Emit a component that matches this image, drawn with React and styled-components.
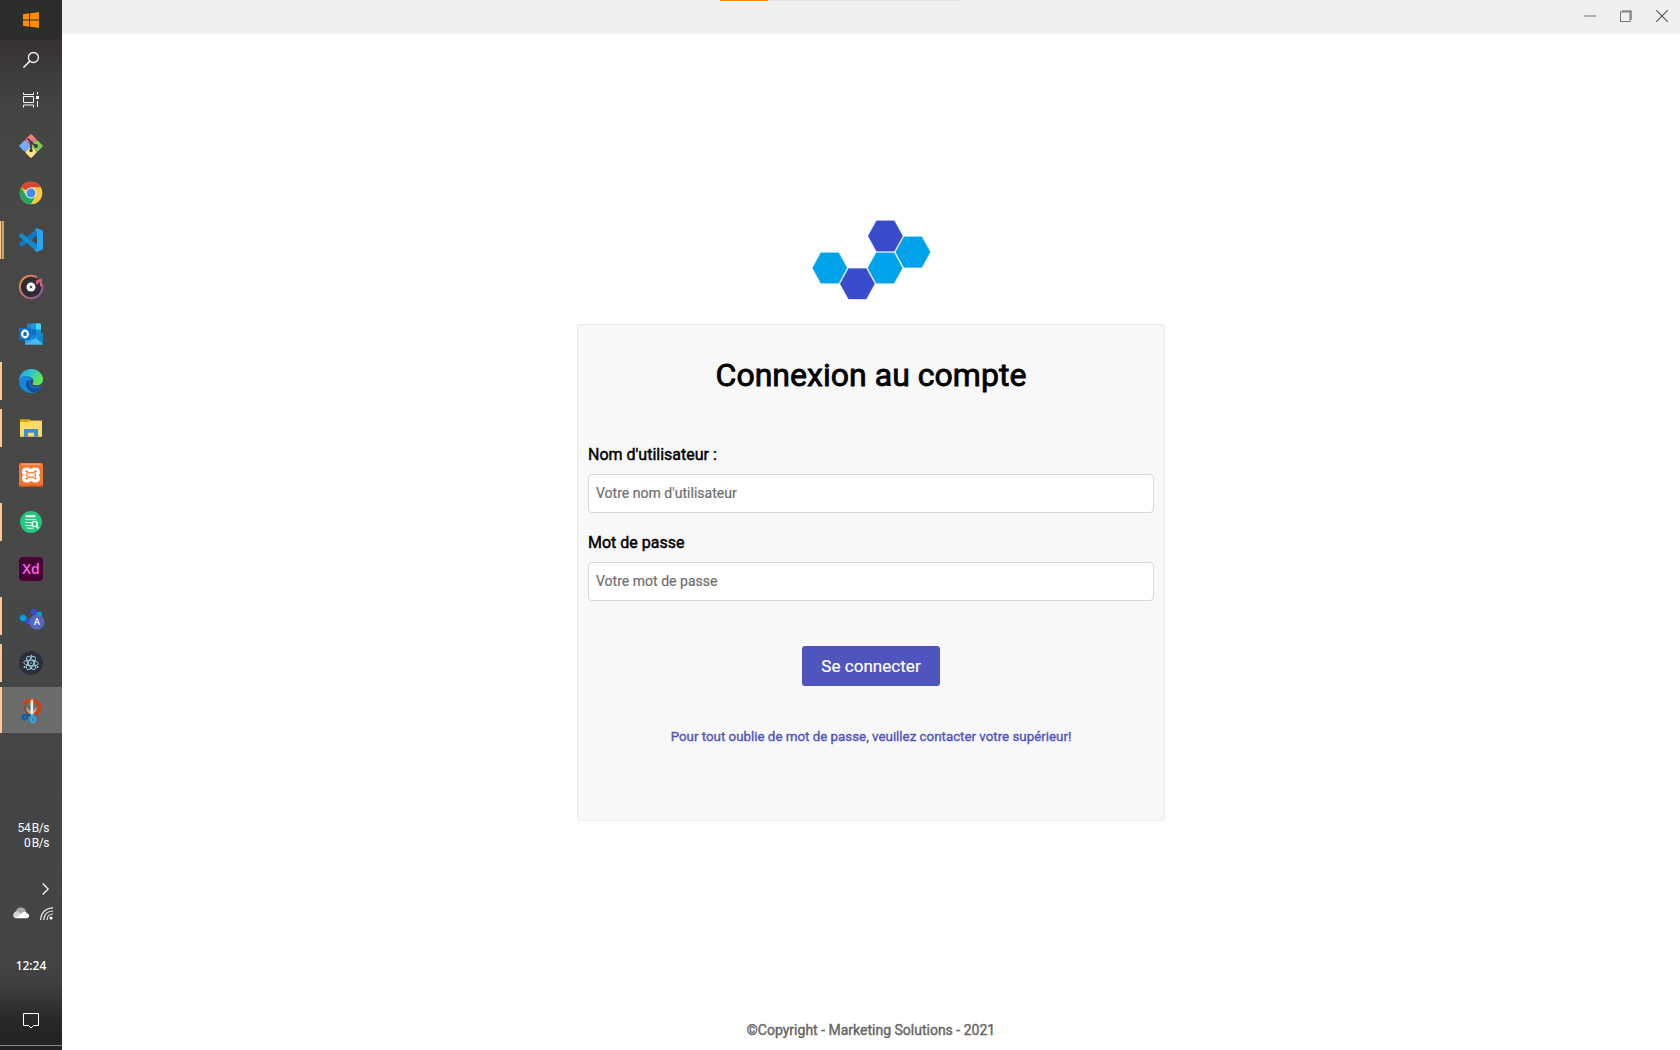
import React from "react";
import styled, { createGlobalStyle } from "styled-components";

const GlobalStyle = createGlobalStyle`
  * { box-sizing: border-box; }
  html, body { margin: 0; padding: 0; overflow: hidden; }
  body { font-family: Roboto, "Liberation Sans", sans-serif; background: #fff; }
`;

const Desktop = styled.div`
  display: flex;
  width: 1680px;
  height: 1050px;
  overflow: hidden;
`;

const Taskbar = styled.aside`
  display: flex;
  flex-direction: column;
  width: 62px;
  height: 1050px;
  flex: none;
  background: linear-gradient(180deg, #302e2d 0, #363332 40px, #444443 105px, #474846 200px, #474847 520px, #444546 760px, #434445 960px, #3d3e3e 985px, #262626 1025px, #222 1050px);
`;

const SystemCell = styled.div`
  display: flex;
  align-items: center;
  justify-content: center;
  height: 40px;
  flex: none;
  background: ${(p) => (p.$dark ? "#2c2c2b" : "transparent")};
`;

const AppList = styled.nav`
  display: flex;
  flex-direction: column;
  gap: 1px;
  padding-top: 3px;
`;

const indicators = {
  none: "transparent",
  open: "linear-gradient(90deg, #ffc884 2px, transparent 2px)",
  stacked: "linear-gradient(90deg, #ffc884 1px, #8d7454 1px, #8d7454 2px, #c69f6e 2px, #c69f6e 4px)",
  focused: "#ffc884",
};

const AppCell = styled.div`
  display: flex;
  align-items: center;
  height: 46px;
  background: ${(p) => (p.$state === "focused" ? "#6b6c6c" : "transparent")};
  &::before {
    content: "";
    width: ${(p) => (p.$state === "stacked" ? 4 : 2)}px;
    height: ${(p) => (p.$state === "focused" ? 46 : 38)}px;
    background: ${(p) => indicators[p.$state]};
  }
`;

const AppIcon = styled.svg`
  width: 26px;
  height: 28px;
  margin-left: ${(p) => (p.$state === "stacked" ? 14 : 16)}px;
  flex: none;
  overflow: visible;
`;

const Network = styled.div`
  display: flex;
  flex-direction: column;
  align-items: flex-end;
  margin-top: 88px;
  padding-right: 13px;
  color: #fff;
  font: 12px/15px Roboto, sans-serif;
  letter-spacing: -0.45px;
  word-spacing: -1px;
`;

const ShowHidden = styled.div`
  display: flex;
  justify-content: flex-end;
  margin-top: 32px;
  padding-right: 13px;
`;

const TrayRow = styled.div`
  display: flex;
  justify-content: space-between;
  margin-top: 11px;
  padding: 0 9px 0 12px;
`;

const Clock = styled.div`
  margin-top: 37px;
  text-align: center;
  color: #fff;
  font: 500 12px/18px "Noto Sans", sans-serif;
  letter-spacing: 0;
`;

const Notifications = styled.div`
  display: flex;
  justify-content: center;
  margin-top: 38px;
`;

const DesktopEdge = styled.div`
  height: 5px;
  margin-top: auto;
  border-top: 1px solid #868686;
`;

const AppWindow = styled.div`
  display: flex;
  flex-direction: column;
  flex: 1;
  background: #fff;
`;

const TitleBar = styled.header`
  display: grid;
  grid-template-columns: 658px 241px 1fr;
  height: 34px;
  flex: none;
  background: #f0f0f0;
`;

const LoadTrack = styled.div`
  grid-column: 2;
  height: 1px;
  background: linear-gradient(90deg, #ff8c00 48px, #e5e5e5 48px);
`;

const WindowControls = styled.div`
  display: flex;
  justify-content: flex-end;
  gap: 24px;
  padding: 10px 12px 0 0;
`;

const Glyph = styled.svg`
  display: block;
  width: ${(p) => p.$w}px;
  height: ${(p) => p.$h}px;
  flex: none;
`;

const Page = styled.main`
  display: flex;
  flex-direction: column;
  align-items: center;
  flex: 1;
  padding-top: 185px;
`;

const LogoMark = styled.svg`
  width: 120px;
  height: 82px;
  flex: none;
`;

const LoginCard = styled.form`
  display: flex;
  flex-direction: column;
  width: 588px;
  height: 497px;
  margin-top: 23px;
  padding: 0 10px;
  background: #f8f8f8;
  border: 1px solid #ebebeb;
  border-radius: 3px;
`;

const Title = styled.h1`
  margin: 31px 0 0;
  text-align: center;
  color: #000;
  font: 400 32px/38px Roboto, sans-serif;
  -webkit-text-stroke: 0.85px #000;
  letter-spacing: 0.03px;
`;

const Field = styled.div`
  display: flex;
  flex-direction: column;
  margin-top: ${(p) => p.$gap}px;
`;

const Label = styled.label`
  color: #000;
  font: 400 16px/20px Roboto, sans-serif;
  -webkit-text-stroke: 0.45px #000;
  margin-bottom: 9px;
`;

const TextInput = styled.input`
  width: 566px;
  height: 39px;
  padding: 0 7px 2px;
  border: 1px solid #d9d9d9;
  border-radius: 4px;
  background: #fff;
  outline: none;
  font: 400 14px Roboto, sans-serif;
  letter-spacing: 0.02px;
  &::placeholder {
    color: #6f6f6f;
    opacity: 1;
    -webkit-text-stroke: 0.2px #6f6f6f;
  }
`;

const SubmitButton = styled.button`
  align-self: center;
  width: 138px;
  height: 40px;
  margin-top: 45px;
  padding: 0;
  border: 0;
  border-radius: 3px;
  background: #5055be;
  color: #fff;
  font: 400 17px/40px Roboto, sans-serif;
  -webkit-text-stroke: 0.2px #fff;
  letter-spacing: 0.04px;
`;

const Help = styled.p`
  margin: 42px 0 0;
  text-align: center;
  color: #5055be;
  font: 400 13.333px/18px Roboto, sans-serif;
  -webkit-text-stroke: 0.35px #5055be;
`;

const Footer = styled.footer`
  margin-top: auto;
  padding-bottom: 10px;
  color: #666;
  font: 400 14px/20px Roboto, sans-serif;
  -webkit-text-stroke: 0.4px #666;
`;

const icons = {
  git: (
    <>
      <g transform="rotate(45 13 14)">
        <rect x="4.5" y="5.5" width="8.5" height="8.5" rx="1.2" fill="#f17c80" />
        <rect x="13" y="5.5" width="8.5" height="8.5" rx="1.2" fill="#80cf4a" />
        <rect x="13" y="14" width="8.5" height="8.5" rx="1.2" fill="#ffe28a" />
        <rect x="4.5" y="14" width="8.5" height="8.5" rx="1.2" fill="#75aaff" />
      </g>
      <g transform="translate(13 14) rotate(45)">
        <rect x="-8.5" y="-8.5" width="8" height="8" rx="1.2" fill="#f17c80" />
        <rect x=".5" y="-8.5" width="8" height="8" rx="1.2" fill="#80cf4a" />
        <rect x=".5" y=".5" width="8" height="8" rx="1.2" fill="#ffe28a" />
        <rect x="-8.5" y=".5" width="8" height="8" rx="1.2" fill="#75aaff" />
      </g>
      <path d="M9.5 6.5L13 10v9M13 10.500l5 3.500" fill="none" stroke="#3f4040" strokeWidth="1.8" />
      <circle cx="13" cy="10.5" r="1.8" fill="#3f4040" />
      <circle cx="18" cy="14" r="1.9" fill="#3f4040" />
      <circle cx="13" cy="18.5" r="1.8" fill="#3f4040" />
    </>
  ),
  chrome: (
    <>
      <circle cx="13" cy="14" r="11.2" fill="#fdc93c" />
      <path d="M13 14L3.3 8.4A11.2 11.2 0 0 1 22.7 8.4H13z" fill="#dc4437" />
      <path d="M3.3 8.4a11.2 11.2 0 0 0 9.7 16.8l4.9-8.4-9.8 0z" fill="#1fa363" />
      <path d="M13 8.4h9.7a11.2 11.2 0 0 1-9.7 16.8l4.9-8.4z" fill="#fdc93c" />
      <circle cx="13" cy="14" r="5.5" fill="#f3f3f3" />
      <circle cx="13" cy="14" r="4.5" fill="#4688f4" />
    </>
  ),
  vscode: (
    <>
      <path d="M19 2.2L1.2 17.3v2l2.3 1.7L19 9.5z" fill="#1179bd" />
      <path d="M19 25.8L1.2 10.7v-2L3.5 7 19 18.5z" fill="#1688d2" />
      <path d="M18.5 2l6.5 2.800v18.400L18.5 26c-.8-.4-1.3-.9-1.3-1.5L19 22V6l-1.800-2.500c0-.6.5-1.100 1.300-1.500z" fill="#27a4f3" />
    </>
  ),
  groove: (
    <>
      <defs>
        <linearGradient id="ring" x1="0" y1="0" x2="1" y2="1">
          <stop offset="0" stopColor="#ff9640" /><stop offset=".5" stopColor="#cf6b78" /><stop offset="1" stopColor="#8455b8" />
        </linearGradient>
      </defs>
      <circle cx="13" cy="14" r="10" fill="#302d30" />
      <path d="M19 4.3A11.3 11.3 0 1 0 24 11" fill="none" stroke="url(#ring)" strokeWidth="1.8" />
      <path d="M18 9l5-2.300v6.500M22.500 7l-4 4" fill="none" stroke="#c86675" strokeWidth="2" />
      <circle cx="13" cy="14" r="4.5" fill="#fff" />
      <circle cx="13" cy="14" r="1.3" fill="#555" />
    </>
  ),
  outlook: (
    <>
      <rect x="9" y="3.5" width="14" height="14" rx="1" fill="#1588d1" />
      <path d="M13.5 3.5H18v6.200h-4.500z" fill="#2094dd" />
      <path d="M18 3.5h4q1 0 1 1v5.200h-5z" fill="#50d5ff" />
      <path d="M13.5 9.7H18v5h-4.500z" fill="#0b6fbd" />
      <path d="M18 9.7h5v4h-5z" fill="#1490df" />
      <path d="M7 13l9 5 9-5v11.500H7z" fill="#28a8ea" />
      <path d="M7 15l18 9.500V13l-7.500 5z" fill="#1488cf" />
      <path d="M7 24.500L18 18l7 6.500z" fill="#45bdee" />
      <rect x="1" y="8" width="12" height="12" rx="1" fill="#0872c8" />
      <ellipse cx="7" cy="14" rx="2.9" ry="3.4" fill="none" stroke="#fff" strokeWidth="2.1" />
    </>
  ),
  edge: (
    <>
      <defs>
        <linearGradient id="wave" x1="0" y1="0" x2="1" y2=".5">
          <stop offset="0" stopColor="#219bdd" /><stop offset=".5" stopColor="#32c5cb" /><stop offset="1" stopColor="#69e64b" />
        </linearGradient>
      </defs>
      <circle cx="13" cy="14" r="12" fill="#0b6fc8" />
      <path d="M1 14C1 7 6 2 13 2s12 5 12 10c0 4-3 6.500-7 6.500-3 0-4-1-3.500-2 2.500-3 0-6.500-4-7C6 9 2 11 1 14z" fill="url(#wave)" />
      <path d="M2 11c5-4 10-1.500 12 2-3-2-6 1-5.500 4.500C9.500 22 15 24 22.500 21 19 26 14 26 11 25.500 3 24 0 17 2 11z" fill="#1686df" />
      <path d="M9 13.500C6 18 10 25 16 25.500c3-.5 5.500-2.500 7-5-5 2-10 1.500-12-2.500-.7-1.700-.5-3 .5-4z" fill="#114f9b" />
      <path d="M13.500 12.500c-2 2-1.500 5 1 6.500 3 1.500 7 1.500 10 0 .800-1.200 1-2 .700-2.700-1.700 1.700-4.200 2.200-7.200 2.200-3 0-4-1-3.500-2 .800-1.300.7-3-.2-4.200z" fill="#474847" />
    </>
  ),
  explorer: (
    <>
      <path d="M2 5.200h9.500l1.500 1.500h11v4H2z" fill="#e4a50c" />
      <path d="M2 8h9l1-1.300h12V22.800H2z" fill="#ffd866" />
      <path d="M6 22.800V16q0-1 1-1h12q1 0 1 1v6.800h-4v-4h-6v4z" fill="#3590d9" />
      <path d="M2 22.300h4M20 22.300h4" stroke="#f1c248" strokeWidth="1" />
    </>
  ),
  xampp: (
    <>
      <rect x="1" y="2" width="24" height="24" rx="2" fill="#ef762e" />
      <path d="M3 3.500h20" stroke="#ff9c63" strokeWidth="1.5" />
      <path d="M1.500 25.200h23" stroke="#c75619" strokeWidth="1.5" />
      <path d="M8 6.500h2.500L13 8l2.500-1.500H18c2.500 0 4 2 4 4.200 0 1.500-.5 2.500-1.300 3.300.8.800 1.300 1.900 1.300 3.300 0 2.300-1.500 4.200-4 4.200h-2.500L13 20l-2.500 1.500H8c-2.500 0-4-1.900-4-4.200 0-1.400.5-2.500 1.300-3.300C4.500 13.200 4 12.200 4 10.700 4 8.500 5.500 6.500 8 6.500z" fill="#fff" />
      <path d="M7.800 10.300c1.500-.4 2 .8 2.700 1.500h5c.7-.7 1.200-1.900 2.700-1.500M7.800 17.700c1.500.4 2-.8 2.700-1.500h5c.7.7 1.200 1.900 2.700 1.500M8.800 12.500v3M17.200 12.500v3" fill="none" stroke="#ef762e" strokeWidth="1.3" strokeLinecap="round" />
    </>
  ),
  search: (
    <>
      <circle cx="13" cy="14" r="10.9" fill="#25c780" />
      <path d="M8.500 8.300h8" stroke="#fff" strokeWidth="1.9" strokeLinecap="round" />
      <path d="M7.500 11.200c3 .7 7 .7 10 0M7.500 14.200c2 .5 3.500.6 5.500.5M7.500 17.200c2 .5 4 .6 6 .5M9 20c2 .4 4 .4 6 .2" fill="none" stroke="#e9fff5" strokeWidth="1" strokeLinecap="round" />
      <circle cx="16.700" cy="16" r="2.6" fill="#25c780" stroke="#fff" strokeWidth="1.3" />
      <path d="M18.600 18l1.700 2.500" stroke="#fff" strokeWidth="1.5" />
    </>
  ),
  xd: (
    <>
      <rect x="1" y="2" width="24" height="24" rx="4" fill="#470137" />
      <text x="13" y="19" textAnchor="middle" fontFamily="Open Sans, sans-serif" fontSize="14" fontWeight="600" fill="#ff61f6">Xd</text>
    </>
  ),
  marketing: (
    <g transform="translate(0 2)">
      <path d="M12.500 8l1.500-2.700h3.200L18.800 8l-1.600 2.700H14z" fill="#3b4bce" stroke="#3b4bce" strokeWidth=".5" />
      <path d="M2 14l1.600-2.700h3.200L8.400 14l-1.600 2.700H3.600z" fill="#00a2ea" stroke="#00a2ea" />
      <path d="M18 10.500l1.500-2.700h3.200L24.300 10.500l-1.600 2.700h-3.200z" fill="#00a2ea" />
      <path d="M7 17.200l1.700-2.700H12l1.700 2.700L12 20H8.700z" fill="#3b4bce" />
      <circle cx="19" cy="18" r="7.600" fill="#5668bd" />
      <text x="19" y="21.300" textAnchor="middle" fontFamily="Roboto, sans-serif" fontSize="9.5" fontWeight="500" fill="#f3f4ff">A</text>
    </g>
  ),
  electron: (
    <>
      <circle cx="13" cy="14" r="12" fill="#2c2e3b" />
      <g fill="none" stroke="#a4dce2" strokeWidth=".9">
        <ellipse cx="13" cy="14" rx="7.300" ry="2.800" transform="rotate(5 13 14)" />
        <ellipse cx="13" cy="14" rx="7.300" ry="2.800" transform="rotate(62 13 14)" />
        <ellipse cx="13" cy="14" rx="7.300" ry="2.800" transform="rotate(118 13 14)" />
      </g>
      <g fill="#a4dce2"><circle cx="13" cy="14" r=".8" /><circle cx="13.500" cy="7" r="1" /><circle cx="6.500" cy="18" r="1" /><circle cx="19.500" cy="18" r="1" /></g>
    </>
  ),
  snip: (
    <g transform="translate(0 -1.500)">
      <path d="M5.500 8.200C6.500 5.200 9.500 4.200 13.500 4.300c6 .2 9.800 4 9.600 8.500-.3 4.700-3.300 8-7.600 8.300v-2.800c2.500-1 4-3 4-5.400 0-3-1.700-4.900-4.700-5.200-4-.4-6.200.5-7.500 2.700-1.500-.8-2.200-1.200-1.800-2.200z" fill="#d93d0c" />
      <path d="M6 12l2-1c-.2 3.500 1 6 3.500 8l-1.500 1.500C7.500 18.500 6 15.500 6 12z" fill="#a93d1e" />
      <path d="M19 12.500l-6 6 1.500 1.500c2.500-1.800 4.300-4.300 4.500-7.500zM8 12.500l5 5v2.500c-3-1.500-5-4-5-7.500z" fill="#b2b2b2" />
      <path d="M12.500 5.500l2.700-.5v17l-2.700-1z" fill="#ececec" />
      <g fill="none" strokeWidth="2.2">
        <circle cx="6.700" cy="22.500" r="2.200" stroke="#0563ad" />
        <path d="M8.700 21.300l4.300-1.300" stroke="#0563ad" />
        <circle cx="15" cy="25.200" r="2.300" stroke="#1eaaf1" />
        <path d="M14.500 22.800v-3" stroke="#1eaaf1" />
      </g>
    </g>
  ),
};

const apps = [
  ["git", "none"], ["chrome", "none"], ["vscode", "stacked"], ["groove", "none"],
  ["outlook", "none"], ["edge", "open"], ["explorer", "open"], ["xampp", "none"],
  ["search", "open"], ["xd", "none"], ["marketing", "open"], ["electron", "open"], ["snip", "focused"],
];

const hexagons = [
  [17.6, 48, "#00a2ea"],
  [45.2, 63.8, "#3b4bce"],
  [72.9, 48, "#00a2ea"],
  [73.2, 16, "#3b4bce"],
  [100.7, 32.1, "#00a2ea"],
];

function Logo() {
  return (
    <LogoMark viewBox="0 0 120 82">
      {hexagons.map(([x, y, color]) => (
        <path
          key={`${x}-${y}`}
          transform={`translate(${x + 1.2} ${y + 1})`}
          d="M-17.300 0L-8.900-15.300H8.900L17.300 0 8.900 15.300H-8.900z"
          fill={color}
          stroke={color}
          strokeOpacity=".3"
        />
      ))}
    </LogoMark>
  );
}

function Sidebar() {
  return (
    <Taskbar>
      <SystemCell $dark>
        <Glyph $w={16} $h={16} viewBox="0 0 16 16">
          <path d="M0 2.200l6-.9V7.500H0zM7 1.200L16 0v7.500H7zM0 8.500h6v6.200l-6-.9zM7 8.500h9V16l-9-1.200z" fill="#ff8c00" />
        </Glyph>
      </SystemCell>
      <SystemCell>
        <Glyph $w={16} $h={16} viewBox="0 0 16 16" fill="none" stroke="#f4f4f4">
          <circle cx="10.400" cy="5.500" r="5" strokeWidth="1.3" />
          <path d="M6.900 9.100L.4 15.600" strokeWidth="1.5" />
        </Glyph>
      </SystemCell>
      <SystemCell>
        <Glyph $w={16} $h={16} viewBox="0 0 16 16" fill="none" stroke="#f4f4f4">
          <path d="M.5 .5v2h10v-2M.5 15.500v-2.500h10v2.500M.5 4.500h10v6H.5zM14.500 0v2.500M14.500 9v6" />
          <path d="M13 4h3v3h-3z" fill="#fff" stroke="none" />
        </Glyph>
      </SystemCell>
      <AppList>
        {apps.map(([name, state]) => (
          <AppCell key={name} $state={state}>
            <AppIcon $state={state} viewBox="0 0 26 28">{icons[name]}</AppIcon>
          </AppCell>
        ))}
      </AppList>
      <Network>
        <span>54 B/s</span>
        <span>0 B/s</span>
      </Network>
      <ShowHidden>
        <Glyph $w={7} $h={12} viewBox="0 0 7 12">
          <path d="M.7 .5L6.200 6 .7 11.500" fill="none" stroke="#fff" strokeWidth="1.2" />
        </Glyph>
      </ShowHidden>
      <TrayRow>
        <Glyph $w={18} $h={14} viewBox="0 0 18 14">
          <path d="M4 7C4 3 6 1.500 9 1.500c3 0 4.500 1.500 5 4l-6 4z" fill="#a8a8a8" />
          <path d="M3.500 12.200C1.500 12 1 10.500 1.200 9 1.500 6 4 4.500 6.500 5.500l5 4z" fill="#d4d4d4" />
          <path d="M3.500 12.200L10.500 6.500c2.200-1.500 4-.5 4.500 1 1.500.2 2.200 1.200 2.200 2.300s-1 2.400-2.500 2.400z" fill="#fff" />
        </Glyph>
        <Glyph $w={13} $h={14} viewBox="0 0 13 14" fill="none" stroke="#eee" strokeWidth="1.2">
          <path d="M.7 14C.7 7 6 1.800 13 1.800M3.800 14C3.800 8.500 7.500 5 13 5M7 14c0-3.500 2.500-6 6-6" />
          <circle cx="11" cy="12" r="1.600" fill="#fff" stroke="none" />
        </Glyph>
      </TrayRow>
      <Clock>12:24</Clock>
      <Notifications>
        <Glyph $w={16} $h={16} viewBox="0 0 16 16">
          <path d="M.5 .5h15v12h-5L8 15l-2.500-2.500h-5z" fill="none" stroke="#fff" />
        </Glyph>
      </Notifications>
      <DesktopEdge />
    </Taskbar>
  );
}

export default function App() {
  return (
    <>
      <GlobalStyle />
      <Desktop>
        <Sidebar />
        <AppWindow>
          <TitleBar>
            <LoadTrack />
            <WindowControls>
              <Glyph $w={12} $h={12} viewBox="0 0 12 12"><path d="M0 6h12" stroke="#b0b0b0" strokeWidth="2" /></Glyph>
              <Glyph $w={12} $h={12} viewBox="0 0 12 12" fill="none">
                <path d="M2 1h9v9" stroke="#888" strokeWidth="1.6" />
                <rect x=".5" y="2" width="9.5" height="9.5" fill="#f0f0f0" stroke="#777" />
              </Glyph>
              <Glyph $w={12} $h={12} viewBox="0 0 12 12"><path d="M.3 .3l11.400 11.400M11.700 .3L.3 11.700" stroke="#555" strokeWidth="1.2" /></Glyph>
            </WindowControls>
          </TitleBar>
          <Page>
            <Logo />
            <LoginCard onSubmit={(e) => e.preventDefault()}>
              <Title>Connexion au compte</Title>
              <Field $gap={51}>
                <Label htmlFor="user">Nom d'utilisateur :</Label>
                <TextInput id="user" placeholder="Votre nom d'utilisateur" />
              </Field>
              <Field $gap={20}>
                <Label htmlFor="password">Mot de passe</Label>
                <TextInput id="password" type="password" placeholder="Votre mot de passe" />
              </Field>
              <SubmitButton type="submit">Se connecter</SubmitButton>
              <Help>Pour tout oublie de mot de passe, veuillez contacter votre supérieur!</Help>
            </LoginCard>
            <Footer>©Copyright - Marketing Solutions - 2021</Footer>
          </Page>
        </AppWindow>
      </Desktop>
    </>
  );
}
